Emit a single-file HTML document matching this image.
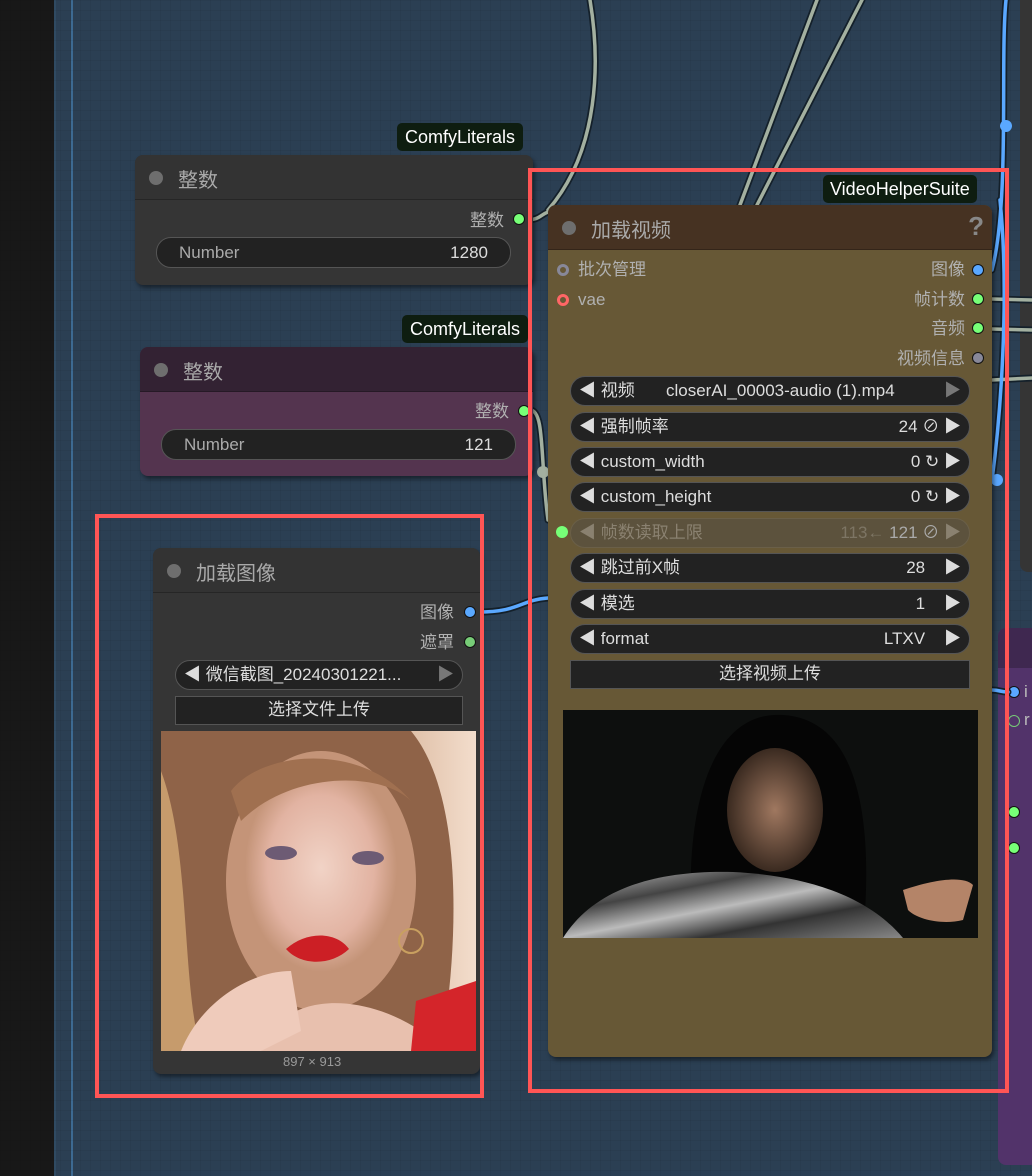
<!DOCTYPE html>
<html><head><meta charset="utf-8"><style>
*{margin:0;padding:0;box-sizing:border-box}
body{width:1032px;height:1176px;overflow:hidden;position:relative;background:#2b3f53;font-family:"Liberation Sans","Noto Sans CJK SC",sans-serif;color:#b8b8b8;font-size:17px}
.abs{position:absolute}
.grid{position:absolute;inset:0;background-image:linear-gradient(rgba(0,0,0,.05) 1px,transparent 1px),linear-gradient(90deg,rgba(0,0,0,.05) 1px,transparent 1px);background-size:10px 10px}
.node{position:absolute;border-radius:8px;box-shadow:2px 3px 4px rgba(0,0,0,.45);overflow:hidden}
.title{position:absolute;left:0;right:0;top:0;height:45px;border-bottom:1px solid rgba(0,0,0,.25)}
.title .dot{position:absolute;left:14px;top:16px;width:14px;height:14px;border-radius:50%;background:#6e6e6e}
.title span{position:absolute;left:43px;top:9px;font-size:20px;color:#a9a9a9}
.badge{position:absolute;background:#0e1d10;color:#fff;font-size:18px;border-radius:5px;padding:3px 8px;line-height:22px}
.lbl{position:absolute;font-size:17px;color:#b0b0b0;line-height:20px;white-space:nowrap}
.sd{position:absolute;width:12px;height:12px;border-radius:50%;border:1.5px solid #111}
.pill{position:absolute;height:30px;border-radius:15px;background:#222;border:1.5px solid #555;font-size:17px;line-height:27px;color:#ccc;white-space:nowrap}
.pill .l{position:absolute;left:8px;color:#ddd}
.pill .r{position:absolute;right:8px;color:#ddd}
.pill .v{position:absolute}
.btn{position:absolute;background:#222;border:1.5px solid #555;color:#ddd;text-align:center;font-size:17px;line-height:26px}
.red{position:absolute;border:4px solid #ff5555}
</style></head><body>
<div class="abs" style="left:0;top:0;width:54px;height:1176px;background:#181818"></div>
<div class="abs" style="left:54px;top:0;width:2px;height:1176px;background:#2f4a62"></div>
<div class="abs" style="left:71px;top:0;width:2px;height:1176px;background:#3d6a92"></div>
<div class="grid"></div>

<div class="abs" style="left:1020px;top:0;width:12px;height:572px;background:#353535;border-radius:0 0 0 8px"></div>
<div class="abs" style="left:998px;top:628px;width:40px;height:537px;background:#52336a;border-radius:8px"></div>
<div class="abs" style="left:998px;top:628px;width:40px;height:40px;background:#3f2850;border-radius:8px 0 0 0"></div>
<div class="lbl" style="left:1024px;top:682px;color:#bbb">i</div>
<div class="lbl" style="left:1024px;top:710px;color:#bbb">r</div>
<div class="sd" style="left:1008px;top:686px;background:#5aa8ff"></div>
<div class="sd" style="left:1008px;top:715px;background:#52336a;border-color:#7c7"></div>
<div class="sd" style="left:1008px;top:806px;background:#7f7"></div>
<div class="sd" style="left:1008px;top:842px;background:#7f7"></div>

<svg class="abs" style="left:0;top:0" width="1032" height="1176">
<g fill="none" stroke-linecap="round">
<g stroke="#14202a" stroke-width="7">
<path d="M590 0 C600 60 600 150 548 210"/>
<path d="M817 0 L740 205"/><path d="M862 0 L757 205"/>
<path d="M478 612 C520 612 520 600 548 598"/>
<path d="M1006 0 C1000 60 1010 200 992 270"/>
<path d="M992 480 C1000 420 1010 300 1000 200"/>
<path d="M525 220 C540 220 540 215 548 212"/>
<path d="M530 410 C545 410 540 460 548 520"/>
<path d="M992 299 L1032 300"/><path d="M992 329 L1032 330"/><path d="M992 380 L1032 378"/>
<path d="M992 690 C1000 690 1000 692 1008 692"/>
</g>
<g stroke="#a3b0a0" stroke-width="3.5">
<path d="M590 0 C600 60 600 150 548 210"/>
<path d="M817 0 L740 205"/><path d="M862 0 L757 205"/>
<path d="M525 220 C540 220 540 215 548 212"/>
<path d="M530 410 C545 410 540 460 548 520"/>
<path d="M992 299 L1032 300"/><path d="M992 329 L1032 330"/><path d="M992 380 L1032 378"/>
</g>
<g stroke="#5aa8ff" stroke-width="3.5">
<path d="M478 612 C520 612 520 600 548 598"/>
<path d="M1006 0 C1000 60 1010 200 992 270"/>
<path d="M992 480 C1000 420 1010 300 1000 200"/>
<path d="M992 690 C1000 690 1000 692 1008 692"/>
</g>
</g>
<circle cx="1006" cy="126" r="6" fill="#5aa8ff"/>
<circle cx="997" cy="480" r="6" fill="#5aa8ff"/>
<circle cx="543" cy="472" r="6" fill="#a3b0a0"/>
</svg>

<div class="badge" style="left:397px;top:123px">ComfyLiterals</div>
<div class="node" style="left:135px;top:155px;width:398px;height:130px;background:#353535">
 <div class="title" style="background:#333"><div class="dot"></div><span>整数</span></div>
</div>
<div class="lbl" style="left:470px;top:211px">整数</div>
<div class="sd" style="left:513px;top:213px;background:#7f7"></div>
<div class="pill" style="left:156px;top:237px;width:355px;height:31px;color:#aaa"><span class="v" style="left:22px;top:1px;color:#aaa">Number</span><span class="v" style="right:22px;top:1px;color:#ddd">1280</span></div>

<div class="badge" style="left:402px;top:315px">ComfyLiterals</div>
<div class="node" style="left:140px;top:347px;width:393px;height:129px;background:#54344f">
 <div class="title" style="background:#332233"><div class="dot"></div><span>整数</span></div>
</div>
<div class="lbl" style="left:475px;top:402px">整数</div>
<div class="sd" style="left:518px;top:405px;background:#7f7"></div>
<div class="pill" style="left:161px;top:429px;width:355px;height:31px"><span class="v" style="left:22px;top:1px;color:#aaa">Number</span><span class="v" style="right:22px;top:1px;color:#ddd">121</span></div>

<div class="node" style="left:153px;top:548px;width:327px;height:526px;background:#353535">
 <div class="title" style="background:#333"><div class="dot"></div><span>加载图像</span></div>
</div>
<div class="lbl" style="left:420px;top:603px">图像</div>
<div class="sd" style="left:464px;top:606px;background:#5aa8ff"></div>
<div class="lbl" style="left:420px;top:633px">遮罩</div>
<div class="sd" style="left:464px;top:636px;background:#7c7"></div>
<div class="pill" style="left:175px;top:660px;width:288px"><span class="l">◀ 微信截图_20240301221...</span><span class="r" style="color:#777">▶</span></div>
<div class="btn" style="left:175px;top:696px;width:288px;height:29px">选择文件上传</div>
<svg class="abs" style="left:161px;top:731px" width="315" height="320">
<defs>
<radialGradient id="f" cx="50%" cy="45%" r="40%"><stop offset="0" stop-color="#f1d3c6"/><stop offset=".7" stop-color="#e2b3a2"/><stop offset="1" stop-color="#c49478"/></radialGradient>
<linearGradient id="bg1" x1="0" x2="1"><stop offset="0" stop-color="#9a6a4a"/><stop offset=".5" stop-color="#c59a78"/><stop offset="1" stop-color="#f3ddcc"/></linearGradient>
</defs>
<rect width="315" height="320" fill="url(#bg1)"/>
<path d="M0 0 H250 C300 60 300 200 280 320 H0Z" fill="#8f6348"/>
<path d="M0 40 C30 120 20 250 40 320 H0Z" fill="#c69b6c"/>
<ellipse cx="160" cy="150" rx="95" ry="130" fill="url(#f)"/>
<path d="M70 60 C100 20 200 10 250 70 C220 40 130 40 80 90Z" fill="#a07050"/>
<ellipse cx="120" cy="122" rx="16" ry="7" fill="#6d5b74"/>
<ellipse cx="207" cy="127" rx="16" ry="7" fill="#6d5b74"/>
<path d="M125 218 C145 200 175 200 188 218 C170 235 140 235 125 218Z" fill="#cc1f25"/>
<path d="M100 320 C120 260 200 260 260 300 L270 320Z" fill="#e8c0ae"/>
<path d="M255 270 L315 250 V320 H250Z" fill="#d4252a"/>
<path d="M20 320 C40 270 90 240 130 240 L140 300 L100 320Z" fill="#efcbbb"/>
<circle cx="250" cy="210" r="12" fill="none" stroke="#c9a060" stroke-width="2"/>
</svg>
<div class="lbl" style="left:283px;top:1052px;font-size:13px;color:#999">897 × 913</div>
<div class="red" style="left:95px;top:514px;width:389px;height:584px"></div>

<div class="badge" style="left:823px;top:175px;padding:3px 7px">VideoHelperSuite</div>
<div class="node" style="left:548px;top:205px;width:444px;height:852px;background:#675836">
 <div class="title" style="background:#463222"><div class="dot"></div><span>加载视频</span><b style="position:absolute;right:8px;top:6px;font-size:26px;color:#888">?</b></div>
</div>
<div class="sd" style="left:557px;top:264px;background:#675836;border:3px solid #889"></div>
<div class="lbl" style="left:578px;top:260px">批次管理</div>
<div class="sd" style="left:557px;top:294px;background:#675836;border:3px solid #f66"></div>
<div class="lbl" style="left:578px;top:290px">vae</div>
<div class="lbl" style="right:67px;top:260px">图像</div><div class="sd" style="left:972px;top:264px;background:#5aa8ff"></div>
<div class="lbl" style="right:67px;top:290px">帧计数</div><div class="sd" style="left:972px;top:293px;background:#7f7"></div>
<div class="lbl" style="right:67px;top:319px">音频</div><div class="sd" style="left:972px;top:322px;background:#7f7"></div>
<div class="lbl" style="right:67px;top:349px">视频信息</div><div class="sd" style="left:972px;top:352px;background:#889"></div>

<div class="pill" style="left:570px;top:376px;width:400px"><span class="l">◀ 视频</span><span class="v" style="left:95px;color:#ddd">closerAI_00003-audio (1).mp4</span><span class="r" style="color:#777">▶</span></div>
<div class="pill" style="left:570px;top:412px;width:400px"><span class="l">◀ 强制帧率</span><span class="r">24 ⊘ ▶</span></div>
<div class="pill" style="left:570px;top:447px;width:400px"><span class="l">◀ custom_width</span><span class="r">0 ↻ ▶</span></div>
<div class="pill" style="left:570px;top:482px;width:400px"><span class="l">◀ custom_height</span><span class="r">0 ↻ ▶</span></div>
<div class="sd" style="left:556px;top:526px;background:#7f7;border:none"></div>
<div class="pill" style="left:570px;top:518px;width:400px;background:#5c523d;border-color:#6a5f48"><span class="l" style="color:#8a8170">◀ 帧数读取上限</span><span class="r" style="color:#8a8170"><span style="color:#7d7564">113←</span> <span style="color:#aaa">121 ⊘</span> ▶</span></div>
<div class="pill" style="left:570px;top:553px;width:400px"><span class="l">◀ 跳过前X帧</span><span class="r">28 &nbsp;&nbsp; ▶</span></div>
<div class="pill" style="left:570px;top:589px;width:400px"><span class="l">◀ 模选</span><span class="r">1 &nbsp;&nbsp; ▶</span></div>
<div class="pill" style="left:570px;top:624px;width:400px"><span class="l">◀ format</span><span class="r">LTXV &nbsp;&nbsp; ▶</span></div>
<div class="btn" style="left:570px;top:660px;width:400px;height:29px">选择视频上传</div>
<svg class="abs" style="left:563px;top:710px" width="415" height="228">
<defs><radialGradient id="vf" cx="50%" cy="50%" r="50%"><stop offset="0" stop-color="#a07860"/><stop offset="1" stop-color="#3a2a20"/></radialGradient>
<linearGradient id="cl" x1="0" x2="1" y1="0" y2="1"><stop offset="0" stop-color="#ccc"/><stop offset=".3" stop-color="#444"/><stop offset=".5" stop-color="#bbb"/><stop offset=".7" stop-color="#333"/><stop offset="1" stop-color="#888"/></linearGradient></defs>
<rect width="415" height="228" fill="#0d0f0e"/>
<path d="M130 228 C120 120 140 0 220 5 C300 10 310 120 300 228Z" fill="#050505"/>
<ellipse cx="212" cy="100" rx="48" ry="62" fill="url(#vf)"/>
<path d="M0 228 C30 180 90 160 170 162 C230 165 300 180 340 228Z" fill="url(#cl)"/>
<path d="M340 180 C370 170 400 165 410 175 L400 210 C380 215 355 210 345 200Z" fill="#b48468"/>
</svg>
<div class="red" style="left:528px;top:168px;width:481px;height:925px"></div>
</body></html>
